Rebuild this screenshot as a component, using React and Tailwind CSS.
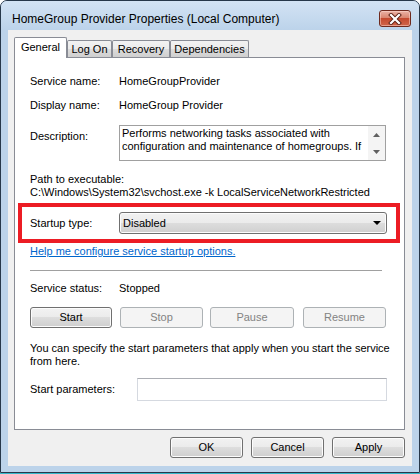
export default function App() {
  const btn =
    "h-[21px] rounded-[3px] border border-[#707070] bg-[linear-gradient(#f2f2f2_0%,#ebebeb_50%,#dddddd_50%,#cfcfcf_100%)] shadow-[inset_0_0_0_1px_#fcfcfc] text-[11px] leading-[13px] text-black flex items-center justify-center";
  const dis =
    "h-[21px] rounded-[3px] border border-[#adb2b5] bg-[#f4f4f4] text-[11px] leading-[13px] text-[#838383] flex items-center justify-center";
  const tab =
    "h-[17px] border border-b-0 border-[#898c95] bg-[linear-gradient(#f2f2f2_0%,#ebebeb_50%,#dddddd_50%,#cfcfcf_100%)] flex justify-center pt-[2px] rounded-t-[2px]";
  return (
    <div className="w-[420px] h-[474px] bg-white [font-family:'Liberation_Sans',Arial,sans-serif] text-[11px] leading-[13px] text-black">
      <div className="w-[420px] h-[473px] rounded-t-[7px] border border-[#27384a] bg-[#bcd3ea] flex flex-col">
        {/* title bar */}
        <div className="h-[29px] flex items-start pl-[11px] rounded-t-[6px] bg-[linear-gradient(#d3e3f4,#bcd3ea)]">
          <div className="mt-[11px] text-[12px] leading-[15px] text-black">
            HomeGroup Provider Properties (Local Computer)
          </div>
          <div className="ml-auto mr-[8px] mt-[9px] w-[32px] h-[17px] rounded-[3px] border border-[#6e2a1e] bg-[linear-gradient(#eab3a6_0%,#d98670_45%,#c44a2f_50%,#d0654a_100%)] shadow-[inset_0_0_0_1px_rgba(255,220,210,0.5)] flex items-center justify-center">
            <svg width="14" height="12" viewBox="0 0 14 12">
              <path d="M3 2 L11 10 M11 2 L3 10" stroke="#5a1f14" strokeWidth="4" strokeLinecap="square" />
              <path d="M3 2 L11 10 M11 2 L3 10" stroke="#ffffff" strokeWidth="2.2" strokeLinecap="square" />
            </svg>
          </div>
        </div>
        {/* client */}
        <div className="mx-[7px] h-[436px] bg-[#f0f0f0] flex flex-col">
          {/* tabs */}
          <div className="mt-[7px] ml-[6px] h-[21px] flex items-end">
            <div className="relative z-10 w-[53px] h-[21px] border border-b-0 border-[#898c95] bg-white flex justify-center pt-[3px] rounded-t-[2px]">
              General
            </div>
            <div className={tab + " w-[45px] mb-[1px]"}>Log On</div>
            <div className={tab + " w-[58px] mb-[1px]"}>Recovery</div>
            <div className={tab + " w-[79px] mb-[1px]"}>Dependencies</div>
          </div>
          {/* panel */}
          <div className="ml-[6px] mt-[-1px] w-[391px] h-[373px] border border-[#898c95] bg-white flex flex-col">
            <div className="mt-[17px] ml-[15px] flex h-[13px]">
              <div className="w-[89px]">Service name:</div>
              <div>HomeGroupProvider</div>
            </div>
            <div className="mt-[11px] ml-[15px] flex h-[13px]">
              <div className="w-[89px]">Display name:</div>
              <div>HomeGroup Provider</div>
            </div>
            <div className="mt-[13px] ml-[15px] flex">
              <div className="w-[89px] pt-[5px]">Description:</div>
              <div className="w-[267px] h-[36px] border border-[#a0a0a0] bg-white flex">
                <div className="flex-1 pl-[2px] pt-[1px] overflow-hidden whitespace-nowrap">
                  <div>Performs networking tasks associated with</div>
                  <div>configuration and maintenance of homegroups. If</div>
                </div>
                <div className="w-[17px] bg-[#f4f4f4] flex flex-col">
                  <div className="h-[17px] flex items-center justify-center">
                    <svg width="7" height="4" viewBox="0 0 7 4">
                      <path d="M0 4 L3.5 0 L7 4 Z" fill="#606060" />
                    </svg>
                  </div>
                  <div className="h-[17px] flex items-center justify-center">
                    <svg width="7" height="4" viewBox="0 0 7 4">
                      <path d="M0 0 L3.5 4 L7 0 Z" fill="#606060" />
                    </svg>
                  </div>
                </div>
              </div>
            </div>
            <div className="mt-[12px] ml-[15px] h-[13px]">Path to executable:</div>
            <div className="ml-[15px] h-[13px] whitespace-nowrap">
              {"C:\\Windows\\System32\\svchost.exe -k LocalServiceNetworkRestricted"}
            </div>
            {/* highlighted startup type */}
            <div className="mt-[4px] ml-[3px] w-[382px] h-[40px] border-4 border-[#ec1c24] flex items-center pl-[8px]">
              <div className="w-[89px]">Startup type:</div>
              <div className="w-[268px] h-[22px] rounded-[3px] border border-[#707070] bg-[linear-gradient(#f2f2f2_0%,#ebebeb_50%,#dddddd_50%,#cfcfcf_100%)] shadow-[inset_0_0_0_1px_#fcfcfc] flex items-center pl-[3px] pr-[5px]">
                <div className="flex-1">Disabled</div>
                <svg width="8" height="4" viewBox="0 0 8 4">
                  <path d="M0 0 L8 0 L4 4 Z" fill="#000" />
                </svg>
              </div>
            </div>
            <div className="mt-[2px] ml-[15px] h-[13px]">
              <span className="text-[#0066cc] underline">Help me configure service startup options.</span>
            </div>
            <div className="mt-[12px] ml-[15px] w-[352px] h-px bg-[#a0a0a0]" />
            <div className="mt-[11px] ml-[15px] flex h-[13px]">
              <div className="w-[89px]">Service status:</div>
              <div>Stopped</div>
            </div>
            <div className="mt-[12px] ml-[15px] flex">
              <div className={btn + " w-[82px]"}>Start</div>
              <div className={dis + " w-[83px] ml-[8px]"}>Stop</div>
              <div className={dis + " w-[84px] ml-[7px]"}>Pause</div>
              <div className={dis + " w-[83px] ml-[9px]"}>Resume</div>
            </div>
            <div className="mt-[14px] ml-[15px] whitespace-nowrap">
              <div>You can specify the start parameters that apply when you start the service</div>
              <div>from here.</div>
            </div>
            <div className="mt-[10px] ml-[15px] flex items-center h-[23px]">
              <div className="w-[107px]">Start parameters:</div>
              <div className="w-[250px] h-[23px] border border-[#d5d9e0] border-t-[#abadb3] bg-white" />
            </div>
          </div>
          {/* dialog buttons */}
          <div className="mt-[7px] pr-[7px] flex justify-end gap-[8px]">
            <div className={btn + " w-[73px] border-[#3c7fb1] shadow-[inset_0_0_0_1px_#8fdcf6]"}>OK</div>
            <div className={btn + " w-[73px]"}>Cancel</div>
            <div className={btn + " w-[73px]"}>Apply</div>
          </div>
        </div>
      </div>
      <div className="h-px bg-[#35b8c9]" />
    </div>
  );
}
